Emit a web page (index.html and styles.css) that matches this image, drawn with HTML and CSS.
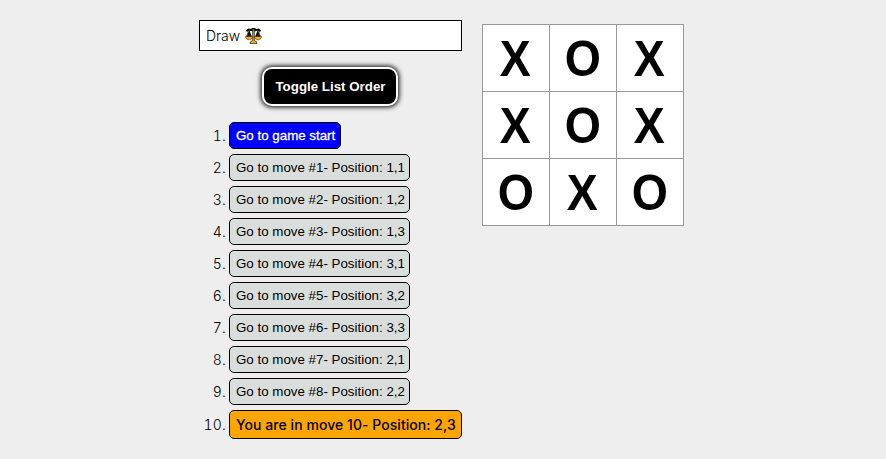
FILE: index.html
```html
<!DOCTYPE html>
<html lang="en">
<head>
<meta charset="utf-8">
<title>Tic Tac Toe</title>
<link rel="stylesheet" href="styles.css">
</head>
<body>
<main class="game">
  <section class="info">
    <div class="status"><span>Draw</span>
      <svg class="scales" viewBox="0 0 16 16" aria-hidden="true">
        <path d="M1 3.200 3 1.500l4 .8V0h2v2.300l4-.8 2 1.700" fill="none" stroke="#000" stroke-width="2"/>
        <path d="M3.500 1.500 0 10h7zM12.500 1.500 9 10h7z" fill="#111"/>
        <path d="M3 3 1 8.500M13 3l2 5.500" stroke="#b58428" stroke-width=".6"/>
        <path d="M0 8.500h7q-.5 3.500-3.500 3.500T0 8.500zM9 8.500h7q-.5 3.500-3.500 3.500T9 8.500z" fill="#f4ad22" stroke="#111" stroke-width=".4"/>
        <path d="M7.200 1h1.600v11.500l2.500 1.500v1.700H4.700V14l2.500-1.500z" fill="#f4ad22" stroke="#111" stroke-width=".7"/>
      </svg>
    </div>
    <button class="toggle">Toggle List Order</button>
    <ol class="moves">
      <li><button class="move start">Go to game start</button></li>
      <li><button class="move">Go to move #1- Position: 1,1</button></li>
      <li><button class="move">Go to move #2- Position: 1,2</button></li>
      <li><button class="move">Go to move #3- Position: 1,3</button></li>
      <li><button class="move">Go to move #4- Position: 3,1</button></li>
      <li><button class="move">Go to move #5- Position: 3,2</button></li>
      <li><button class="move">Go to move #6- Position: 3,3</button></li>
      <li><button class="move">Go to move #7- Position: 2,1</button></li>
      <li><button class="move">Go to move #8- Position: 2,2</button></li>
      <li><div class="current">You are in move 10- Position: 2,3</div></li>
    </ol>
  </section>
  <section class="board">
    <button class="square"><span>X</span></button><button class="square"><span>O</span></button><button class="square"><span>X</span></button>
    <button class="square"><span>X</span></button><button class="square"><span>O</span></button><button class="square"><span>X</span></button>
    <button class="square"><span>O</span></button><button class="square"><span>X</span></button><button class="square"><span>O</span></button>
  </section>
</main>
</body>
</html>
```
FILE: styles.css
```css
* { box-sizing: border-box; }
body {
  margin: 0;
  padding: 20px 0 0 199px;
  background: #eee;
  color: #000;
  font: 300 14px/17px Inter, sans-serif;
}
.game { display: flex; align-items: flex-start; gap: 20px; }
.info { width: 263px; display: flex; flex-direction: column; }
.status {
  display: flex;
  align-items: center;
  gap: 5px;
  height: 31px;
  padding: 0 6px;
  border: 1px solid #000;
  background: #fff;
}
.scales { width: 17px; height: 16px; }
.toggle {
  align-self: flex-start;
  width: 136px;
  height: 39px;
  margin: 16px 0 16px 63px;
  padding: 0 0 0 1px;
  border: 2px solid #fff;
  border-radius: 10px;
  background: #000;
  box-shadow: 0 0 5px 1px #000;
  color: #fff;
  font: bold 13.333px "Liberation Sans", sans-serif;
}
.moves {
  display: flex;
  flex-direction: column;
  gap: 5px;
  margin: 0;
  padding: 0;
  list-style: none;
  counter-reset: move;
}
.moves li { display: flex; align-items: center; counter-increment: move; }
.moves li::before {
  content: counter(move) ".";
  flex: none;
  width: 27px;
  margin-right: 3px;
  font-variant-numeric: tabular-nums;
  letter-spacing: .2px;
  text-align: right;
}
.move {
  width: 181px;
  height: 27px;
  padding: 0 6px;
  border: 1px solid #000;
  border-radius: 5px;
  background: #d9dedc;
  color: #000;
  font: 13.333px "Liberation Sans", sans-serif;
  white-space: nowrap;
  text-align: left;
}
.start { width: 112px; background: #00f; color: #fff; -webkit-text-stroke: .3px #fff; }
.current {
  width: 233px;
  height: 29px;
  padding: 0 6px;
  border: 1px solid #000;
  border-radius: 5px;
  background: orange;
  font-weight: 500;
  letter-spacing: .05px;
  line-height: 28px;
  white-space: nowrap;
}
.board {
  display: grid;
  grid-template-columns: repeat(3, 67px);
  grid-auto-rows: 67px;
  margin-top: 4px;
}
.square {
  width: 68px;
  height: 68px;
  padding: 0;
  border: 1px solid #999;
  background: #fff;
  color: #000;
  font: bold 50px/66px "Liberation Sans", sans-serif;
}
.square span { display: inline-block; transform: translate(-.5px, .5px) scaleX(.93); }
```
